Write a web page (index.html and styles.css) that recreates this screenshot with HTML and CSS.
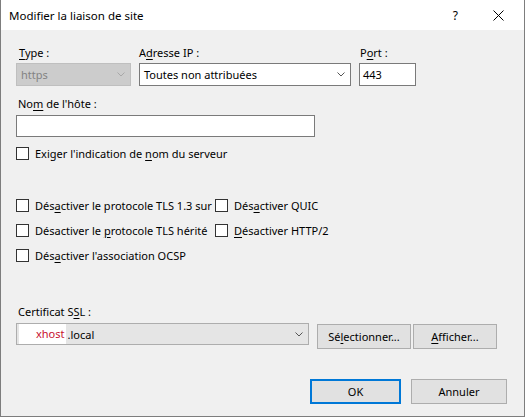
FILE: index.html
```html
<!DOCTYPE html>
<html lang="fr">
<head>
    <meta charset="UTF-8">
    <meta name="viewport" content="width=device-width, initial-scale=1.0">
    <title>Modifier la liaison de site</title>
    <link rel="stylesheet" href="styles.css">
</head>
<body>

    <div class="dialog">
        <div class="titlebar">
            <span class="title">Modifier la liaison de site</span>
            <span class="help">?</span>
            <svg class="close" width="11" height="11" viewBox="0 0 11 11">
                <path d="M0.5 0.5 L10.5 10.5 M10.5 0.5 L0.5 10.5" stroke="#000" stroke-width="1" fill="none"/>
            </svg>
        </div>

        <div class="client">
            <!-- Type / IP / Port -->
            <div class="binding-row">
                <div class="field field-type">
                    <div class="label"><u>T</u>ype :</div>
                    <div class="combo combo-disabled">
                        <span>https</span>
                        <svg class="chevron" width="8" height="5" viewBox="0 0 8 5"><path d="M0.5 0.5 L4 4 L7.5 0.5" stroke="#a8a8a8" fill="none"/></svg>
                    </div>
                </div>
                <div class="field field-ip">
                    <div class="label">A<u>d</u>resse IP :</div>
                    <div class="combo combo-edit">
                        <span>Toutes non attribuées</span>
                        <svg class="chevron" width="8" height="5" viewBox="0 0 8 5"><path d="M0.5 0.5 L4 4 L7.5 0.5" stroke="#555" fill="none"/></svg>
                    </div>
                </div>
                <div class="field field-port">
                    <div class="label">P<u>o</u>rt :</div>
                    <div class="textbox">443</div>
                </div>
            </div>

            <!-- Host name -->
            <div class="label host-label">No<u>m</u> de l'hôte :</div>
            <div class="textbox host-box"></div>

            <div class="check sni">
                <span class="box"></span>
                <span>Exiger l'indication de <u>n</u>om du serveur</span>
            </div>

            <!-- TLS options -->
            <div class="tls-grid">
                <div class="check"><span class="box"></span><span>Dés<u>a</u>ctiver le protocole TLS 1.3 sur</span></div>
                <div class="check"><span class="box"></span><span>Dés<u>a</u>ctiver QUIC</span></div>
                <div class="check"><span class="box"></span><span>Désactiver le <u>p</u>rotocole TLS hérité</span></div>
                <div class="check"><span class="box"></span><span><u>D</u>ésactiver HTTP/2</span></div>
                <div class="check"><span class="box"></span><span>Dés<u>a</u>ctiver l'association OCSP</span></div>
            </div>

            <!-- Certificate -->
            <div class="label cert-label">Certificat S<u>S</u>L :</div>
            <div class="cert-row">
                <div class="combo combo-cert">
                    <span class="redacted">xhost</span><span>.local</span>
                    <svg class="chevron" width="8" height="5" viewBox="0 0 8 5"><path d="M0.5 0.5 L4 4 L7.5 0.5" stroke="#555" fill="none"/></svg>
                </div>
                <button class="btn btn-select">Sé<u>l</u>ectionner...</button>
                <button class="btn btn-view"><u>A</u>fficher...</button>
            </div>

            <div class="footer">
                <button class="btn btn-ok">OK</button>
                <button class="btn btn-cancel">Annuler</button>
            </div>
        </div>
    </div>

</body>
</html>
```

FILE: styles.css
```css
/* Windows style dialog */
body {
    margin: 0;
    background-color: #fff;
    font-family: "Noto Sans", "Open Sans", sans-serif;
    font-size: 11px;
    color: #000;
}

u {
    text-decoration: underline;
    text-underline-offset: 2px;
}

.dialog {
    width: 525px;
    height: 417px;
    box-sizing: border-box;
    border-left: 1px solid #7d7d7d;
    border-right: 1px solid #7d7d7d;
    border-bottom: 1px solid #7d7d7d;
    display: flex;
    flex-direction: column;
}

.titlebar {
    height: 30px;
    background-color: #fff;
    display: flex;
    align-items: center;
    padding-left: 8px;
}

.title {
    flex: 1;
    font-size: 11.5px;
}

.help {
    font-size: 12px;
    margin-right: 35px;
}

.close {
    margin-right: 20px;
}

.client {
    flex: 1;
    background-color: #f0f0f0;
    padding: 15px 17px 0 15px;
}

.label {
    line-height: 16px;
    height: 16px;
    white-space: nowrap;
}

/* first row */
.binding-row {
    display: flex;
    gap: 8px;
}

.field .label {
    margin-bottom: 2px;
}

.field-type { width: 115px; }
.field-type .label { padding-left: 3px; }
.field-ip { width: 212px; }
.field-port { width: 57px; }
.field-port .label { padding-left: 1px; }

.combo,
.textbox {
    box-sizing: border-box;
    height: 23px;
    display: flex;
    align-items: center;
    white-space: nowrap;
}

.combo {
    padding: 0 5px 0 4px;
}

.combo .chevron {
    margin-left: auto;
}

.combo-disabled {
    background-color: #cccccc;
    border: 1px solid #bfbfbf;
    color: #838383;
}

.combo-edit {
    background-color: #fff;
    border: 1px solid #7a7a7a;
}

.textbox {
    background-color: #fff;
    border: 1px solid #7a7a7a;
    padding-left: 3px;
}

.host-label {
    margin-top: 10px;
    padding-left: 2px;
}

.host-box {
    width: 299px;
    height: 22px;
    margin-top: 3px;
}

/* checkboxes */
.check {
    display: flex;
    align-items: center;
    height: 15px;
    white-space: nowrap;
}

.check .box {
    width: 13px;
    height: 13px;
    box-sizing: border-box;
    border: 1px solid #333;
    background-color: #fff;
    margin-right: 6px;
    flex-shrink: 0;
}

.sni {
    margin-top: 9px;
}

.tls-grid {
    margin-top: 37px;
    display: grid;
    grid-template-columns: 199px auto;
    row-gap: 10px;
}

/* certificate */
.cert-label {
    margin-top: 41px;
    padding-left: 2px;
}

.cert-row {
    display: flex;
    align-items: flex-start;
    margin-top: 3px;
}

.combo-cert {
    width: 293px;
    height: 22px;
    background-color: #e5e5e5;
    border: 1px solid #adadad;
    padding-left: 2px;
}

.redacted {
    background-color: #fff;
    color: #c8102e;
    padding: 2px 1px 3px 17px;
    margin-right: 2px;
}

.btn {
    font-family: inherit;
    font-size: 11px;
    color: #000;
    background-color: #e1e1e1;
    border: 1px solid #adadad;
    height: 25px;
    padding: 0;
    box-sizing: border-box;
}

.btn-select {
    width: 94px;
    margin-left: 8px;
    margin-top: 1px;
}

.btn-view {
    width: 84px;
    margin-left: 2px;
    margin-top: 1px;
}

.footer {
    display: flex;
    justify-content: flex-end;
    gap: 10px;
    margin-top: 30px;
}

.btn-ok {
    width: 91px;
    border: 2px solid #0078d7;
}

.btn-cancel {
    width: 96px;
}
```
